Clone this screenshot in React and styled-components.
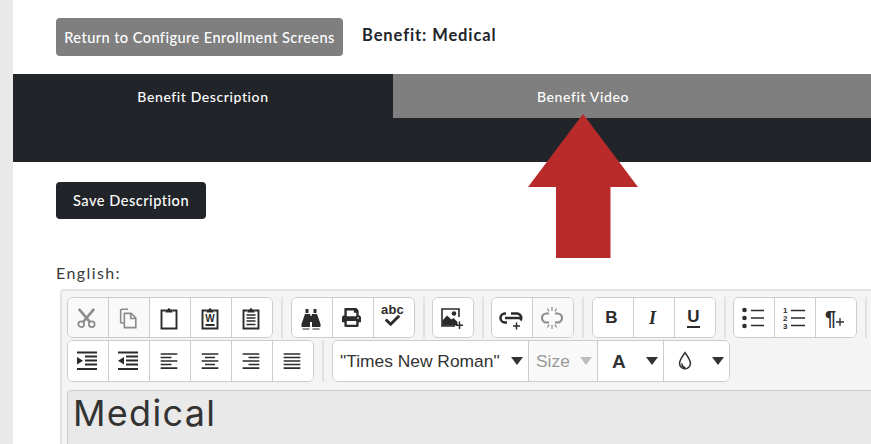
import React from 'react';
import styled, { createGlobalStyle } from 'styled-components';
import { FaPrint, FaCheck } from 'react-icons/fa';

const GlobalStyle = createGlobalStyle`
  html, body { margin: 0; padding: 0; background: #fff; overflow: hidden; }
  * { box-sizing: border-box; }
`;

const uiFont = `'Lato', 'Liberation Sans', sans-serif`;

const Page = styled.div`
  position: relative;
  display: flex;
  width: 871px;
  height: 444px;
  overflow: hidden;
  font-family: ${uiFont};
`;

const Strip = styled.div`
  flex: 0 0 13px;
  background: #e9e9e9;
`;

const Main = styled.main`
  flex: 1;
  min-width: 0;
  background: #fff;
`;

const TopRow = styled.div`
  display: flex;
  align-items: center;
  gap: 19px;
  height: 74px;
  padding: 0 0 0 43px;
`;

const BackButton = styled.button`
  width: 287px;
  height: 38px;
  border: 0;
  border-radius: 4px;
  background: #7f7f7f;
  color: #fff;
  font: 500 14.6px ${uiFont};
  letter-spacing: 0.42px;
  white-space: nowrap;
  padding: 0;
`;

const Title = styled.div`
  margin-top: -4px;
  color: #212529;
  font-size: 16.5px;
  font-weight: 700;
  letter-spacing: 0.9px;
`;

const Band = styled.div`
  height: 88px;
  background: #212529;
`;

const Tabs = styled.div`
  display: flex;
  height: 44px;
  background: #7f7f7f;
`;

const Tab = styled.div`
  flex: 0 0 380px;
  padding-top: 14px;
  background: ${p => (p.$active ? '#212529' : '#7f7f7f')};
  color: #fff;
  text-align: center;
  font-size: 14px;
  font-weight: 500;
  letter-spacing: 0.6px;
`;

const Content = styled.div`
  padding: 20px 0 0 43px;
`;

const SaveButton = styled.button`
  display: block;
  width: 150px;
  height: 37px;
  border: 0;
  border-radius: 4px;
  background: #212529;
  color: #fff;
  font: 500 14.6px ${uiFont};
  letter-spacing: 0.5px;
  padding: 0;
`;

const Label = styled.div`
  margin: 45px 0 0;
  height: 18px;
  color: #3a3a3a;
  font-size: 16px;
  line-height: 18px;
  letter-spacing: 1.4px;
`;

const Editor = styled.div`
  width: 900px;
  height: 200px;
  margin: 7px 0 0 4px;
  padding: 6px 5px;
  border: 2px solid #e3e3e3;
  border-radius: 4px;
  background: #f4f4f4;
`;

const ToolRow = styled.div`
  display: flex;
  height: 41px;
  margin-bottom: ${p => p.$mb || 0}px;
`;

const Group = styled.div`
  display: flex;
  flex: none;
  height: ${p => p.$h || 41}px;
  border: 1px solid #ccc;
  border-radius: 6px;
  background: #fff;
  overflow: hidden;
`;

const Sep = styled.div`
  flex: none;
  width: 2px;
  height: ${p => p.$h || 41}px;
  margin: 0 ${p => p.$r || 7}px 0 8px;
  background: #e2e2e2;
`;

const Tool = styled.div`
  display: flex;
  align-items: center;
  justify-content: center;
  flex: none;
  width: 41px;
  padding-right: 3px;
  border-left: 1px solid #ccc;
  background: ${p => (p.$off ? '#f9f9f9' : '#fff')};
  color: ${p => (p.$off ? '#8c8c8c' : '#2b2b2b')};
  &:first-child { width: 40px; border-left: 0; }
`;

const Glyph = styled.span`
  font: ${p => p.$font || `700 17px 'Liberation Sans', sans-serif`};
  color: inherit;
  line-height: 1;
`;

const Under = styled(Glyph)`
  padding-bottom: 1px;
  border-bottom: 2px solid currentColor;
`;

const Dropdown = styled.div`
  display: flex;
  align-items: center;
  justify-content: ${p => (p.$center ? 'space-between' : 'flex-start')};
  flex: none;
  width: ${p => p.$w}px;
  padding: ${p => p.$pad || '0 7px'};
  border-left: 1px solid #ccc;
  background: ${p => (p.$off ? '#f9f9f9' : '#fff')};
  color: ${p => (p.$off ? '#9a9a9a' : '#333')};
  font: 17.4px 'Liberation Sans', sans-serif;
  white-space: nowrap;
  &:first-child { border-left: 0; }
`;

const Caret = styled.i`
  flex: none;
  width: 0;
  height: 0;
  margin-left: ${p => p.$ml || 0}px;
  border-left: 6px solid transparent;
  border-right: 6px solid transparent;
  border-top: 8px solid ${p => (p.$off ? '#bdbdbd' : '#333')};
`;

const Body = styled.div`
  height: 120px;
  margin-top: 9px;
  padding: 2px 0 0 5px;
  border: 1px solid #ccc;
  border-radius: 4px;
  background: #e9e9e9;
  color: #333;
  font: 400 36px/40px 'Inter', sans-serif;
  letter-spacing: 1.3px;
`;

const Arrow = styled.svg`
  position: absolute;
  left: 528px;
  top: 113px;
`;

const Svg = ({ children, size = 24 }) => (
  <svg width={size} height={size} viewBox="0 0 24 24" fill="none" stroke="currentColor" strokeWidth="1.6">
    {children}
  </svg>
);

const Lines = ({ rows }) => (
  <Svg size={20}>
    {rows.map(([x1, x2], i) => (
      <line key={i} x1={x1} x2={x2} y1={3.5 + i * 4.25} y2={3.5 + i * 4.25} strokeWidth="1.9" />
    ))}
  </Svg>
);

const Cut = () => (
  <Svg size={23}>
    <circle cx="6.500" cy="19" r="3" strokeWidth="1.800" />
    <circle cx="17.500" cy="19" r="3" strokeWidth="1.800" />
    <path d="M8.600 16.600 20 3M15.400 16.600 4 3" strokeWidth="2.600" />
  </Svg>
);
const Copy = () => (
  <Svg size={22}>
    <path d="M8 17.500H5.500Q4 17.500 4 16V4q0-1.500 1.500-1.500H12" strokeWidth="1.800" />
    <path d="M8 7h7.500l5 5v10.500H8zM15 7v5.500h5.500" strokeWidth="1.800" />
  </Svg>
);
const Clip = ({ children }) => (
  <Svg>
    <path d="M8.500 4.500H4.500v18h15v-18H15.500" strokeWidth="1.900" />
    <path d="M8.500 6.500V3.500h2q1.500-3 3 0h2v3z" fill="currentColor" stroke="none" />
    {children}
  </Svg>
);
const ClipWord = () => (
  <Clip>
    <text x="12" y="16" textAnchor="middle" fontFamily="Liberation Sans" fontSize="10" fontWeight="700" fill="currentColor" stroke="none">W</text>
    <line x1="7.500" x2="16.500" y1="19" y2="19" strokeWidth="1.800" />
  </Clip>
);
const ClipText = () => (
  <Clip>
    <path d="M7.500 9h9M7.500 12h9M7.500 15h9M7.500 18.500h9" strokeWidth="1.600" />
  </Clip>
);
const Binoculars = () => (
  <Svg>
    <path d="M6.500 3h3v4h-3zM14.500 3h3v4h-3z" fill="currentColor" stroke="none" />
    <path d="M6 8h5l.5 2h1l.5-2h5l3.500 10v3h-8.500v-5h-2v5H2.500v-3z" fill="currentColor" stroke="none" />
    <path d="M3.500 23h7M13.500 23h7" strokeWidth="1.200" />
  </Svg>
);
const Spell = () => (
  <Stack>
    <SpellText>abc</SpellText>
    <FaCheck size={15} />
  </Stack>
);
const Stack = styled.div`
  display: flex;
  flex-direction: column;
  align-items: center;
  margin-top: -4px;
  svg { margin-top: -3px; }
`;
const SpellText = styled.span`
  font: 700 13px/12px 'Liberation Sans', sans-serif;
  letter-spacing: 0.2px;
`;
const ImagePlus = () => (
  <Svg>
    <path d="M19 11V3H2v17h13" strokeWidth="1.600" />
    <path d="M2.500 19.500v-5l4.500-5 4.500 4 2-1.500 4 4v3.500z" fill="currentColor" stroke="none" />
    <circle cx="14" cy="7.500" r="2.300" fill="currentColor" stroke="none" />
    <path d="M19.500 15.500v7.500M16 19.200h7" strokeWidth="1.500" />
  </Svg>
);
const LinkPlus = () => (
  <Svg>
    <path d="M7 7.500H6a4.500 4.500 0 0 0 0 9h2M12 7.500h6a4.500 4.500 0 0 1 3.500 7" strokeWidth="2.500" />
    <path d="M6 12h15" strokeWidth="2.500" />
    <path d="M17.500 16.500v7M14 20h7" strokeWidth="1.500" />
  </Svg>
);
const Unlink = () => (
  <Svg>
    <path d="M9 7.500H6.500a4.500 4.500 0 0 0 0 9H9M15 7.500h2.500a4.500 4.500 0 0 1 0 9H15" strokeWidth="2.200" />
    <path d="M12 1v4M7.500 2.500 9 5.500M16.500 2.500 15 5.500M12 19v4M7.500 21.500 9 18.500M16.500 21.500 15 18.500" strokeWidth="1.200" />
  </Svg>
);
const Indent = ({ out }) => (
  <Svg>
    <path d="M2 3.500h20M10 7.500h12M10 11.500h12M10 15.500h12M2 20h20" strokeWidth="1.800" />
    <path d={out ? 'M8 8v7.500l-6-3.750z' : 'M2 8v7.500l6-3.750z'} fill="currentColor" stroke="none" />
  </Svg>
);
const Bullets = () => (
  <Svg>
    <circle cx="3.500" cy="4" r="2.300" fill="currentColor" stroke="none" />
    <circle cx="3.500" cy="12" r="2.300" fill="currentColor" stroke="none" />
    <circle cx="3.500" cy="20" r="2.300" fill="currentColor" stroke="none" />
    <path d="M10 4.500h13M10 12h13M10 19.500h13" strokeWidth="1.600" />
  </Svg>
);
const Numbers = () => (
  <Svg>
    <g fontFamily="Liberation Sans" fontSize="8" fontWeight="700" fill="currentColor" stroke="none">
      <text x="1" y="7">1</text>
      <text x="1" y="15">2</text>
      <text x="1" y="23">3</text>
    </g>
    <path d="M9 4.500h14M9 12h14M9 19.500h14" strokeWidth="1.600" />
  </Svg>
);
const Para = () => (
  <ParaWrap>
    <Glyph $font="700 20px 'Liberation Sans', sans-serif">¶</Glyph>
    <svg width="8" height="8" viewBox="0 0 8 8" stroke="currentColor" strokeWidth="1.300">
      <path d="M4 0v8M0 4h8" />
    </svg>
  </ParaWrap>
);
const ParaWrap = styled.div`
  display: flex;
  align-items: flex-end;
  svg { margin: 0 0 2px 0; }
`;
const Drop = () => (
  <Svg size={20}>
    <path d="M12 2c3 4.500 6.500 8 6.500 13a6.500 6.500 0 0 1-13 0C5.500 10 9 6.500 12 2z" strokeWidth="1.800" />
    <path d="M8.500 15a3.500 3.500 0 0 0 4 4.500" strokeWidth="2" />
  </Svg>
);

const left = [[2, 22], [2, 15], [2, 22], [2, 15], [2, 22]];
const center = [[2, 22], [6, 18], [2, 22], [6, 18], [2, 22]];
const right = [[2, 22], [9, 22], [2, 22], [9, 22], [2, 22]];
const justify = [[2, 22], [2, 22], [2, 22], [2, 22], [2, 22]];

const App = () => (
  <Page>
    <GlobalStyle />
    <Strip />
    <Main>
      <TopRow>
        <BackButton>Return to Configure Enrollment Screens</BackButton>
        <Title>Benefit: Medical</Title>
      </TopRow>
      <Band>
        <Tabs>
          <Tab $active>Benefit Description</Tab>
          <Tab>Benefit Video</Tab>
        </Tabs>
      </Band>
      <Content>
        <SaveButton>Save Description</SaveButton>
        <Label>English:</Label>
        <Editor>
          <ToolRow $mb={2}>
            <Group>
              <Tool $off><Cut /></Tool>
              <Tool $off><Copy /></Tool>
              <Tool><Clip /></Tool>
              <Tool><ClipWord /></Tool>
              <Tool><ClipText /></Tool>
            </Group>
            <Sep $r={8} />
            <Group>
              <Tool><Binoculars /></Tool>
              <Tool><FaPrint size={19} /></Tool>
              <Tool><Spell /></Tool>
            </Group>
            <Sep />
            <Group>
              <Tool><ImagePlus /></Tool>
            </Group>
            <Sep />
            <Group>
              <Tool><LinkPlus /></Tool>
              <Tool $off><Unlink /></Tool>
            </Group>
            <Sep $r={8} />
            <Group>
              <Tool><Glyph>B</Glyph></Tool>
              <Tool><Glyph $font="italic 700 18px 'Liberation Serif', serif">I</Glyph></Tool>
              <Tool><Under>U</Under></Tool>
            </Group>
            <Sep />
            <Group>
              <Tool><Bullets /></Tool>
              <Tool><Numbers /></Tool>
              <Tool><Para /></Tool>
            </Group>
            <Sep />
          </ToolRow>
          <ToolRow>
            <Group $h={42}>
              <Tool><Indent /></Tool>
              <Tool><Indent out /></Tool>
              <Tool><Lines rows={left} /></Tool>
              <Tool><Lines rows={center} /></Tool>
              <Tool><Lines rows={right} /></Tool>
              <Tool><Lines rows={justify} /></Tool>
            </Group>
            <Sep $h={42} $r={8} />
            <Group $h={42}>
              <Dropdown $w={195}>"Times New Roman"<Caret $ml={11} /></Dropdown>
              <Dropdown $w={69} $off>Size<Caret $off $ml={10} /></Dropdown>
              <Dropdown $w={66} $center $pad="0 5px 0 14px"><Glyph $font="700 19px 'Liberation Sans', sans-serif">A</Glyph><Caret /></Dropdown>
              <Dropdown $w={66} $center $pad="0 5px 0 11px"><Drop /><Caret /></Dropdown>
            </Group>
          </ToolRow>
          <Body>Medical</Body>
        </Editor>
      </Content>
    </Main>
    <Arrow width="110" height="146" viewBox="0 0 110 146">
      <path d="M55 1 110 74H82.500V145H28V74H0z" fill="#b92b2b" />
    </Arrow>
  </Page>
);

export default App;
